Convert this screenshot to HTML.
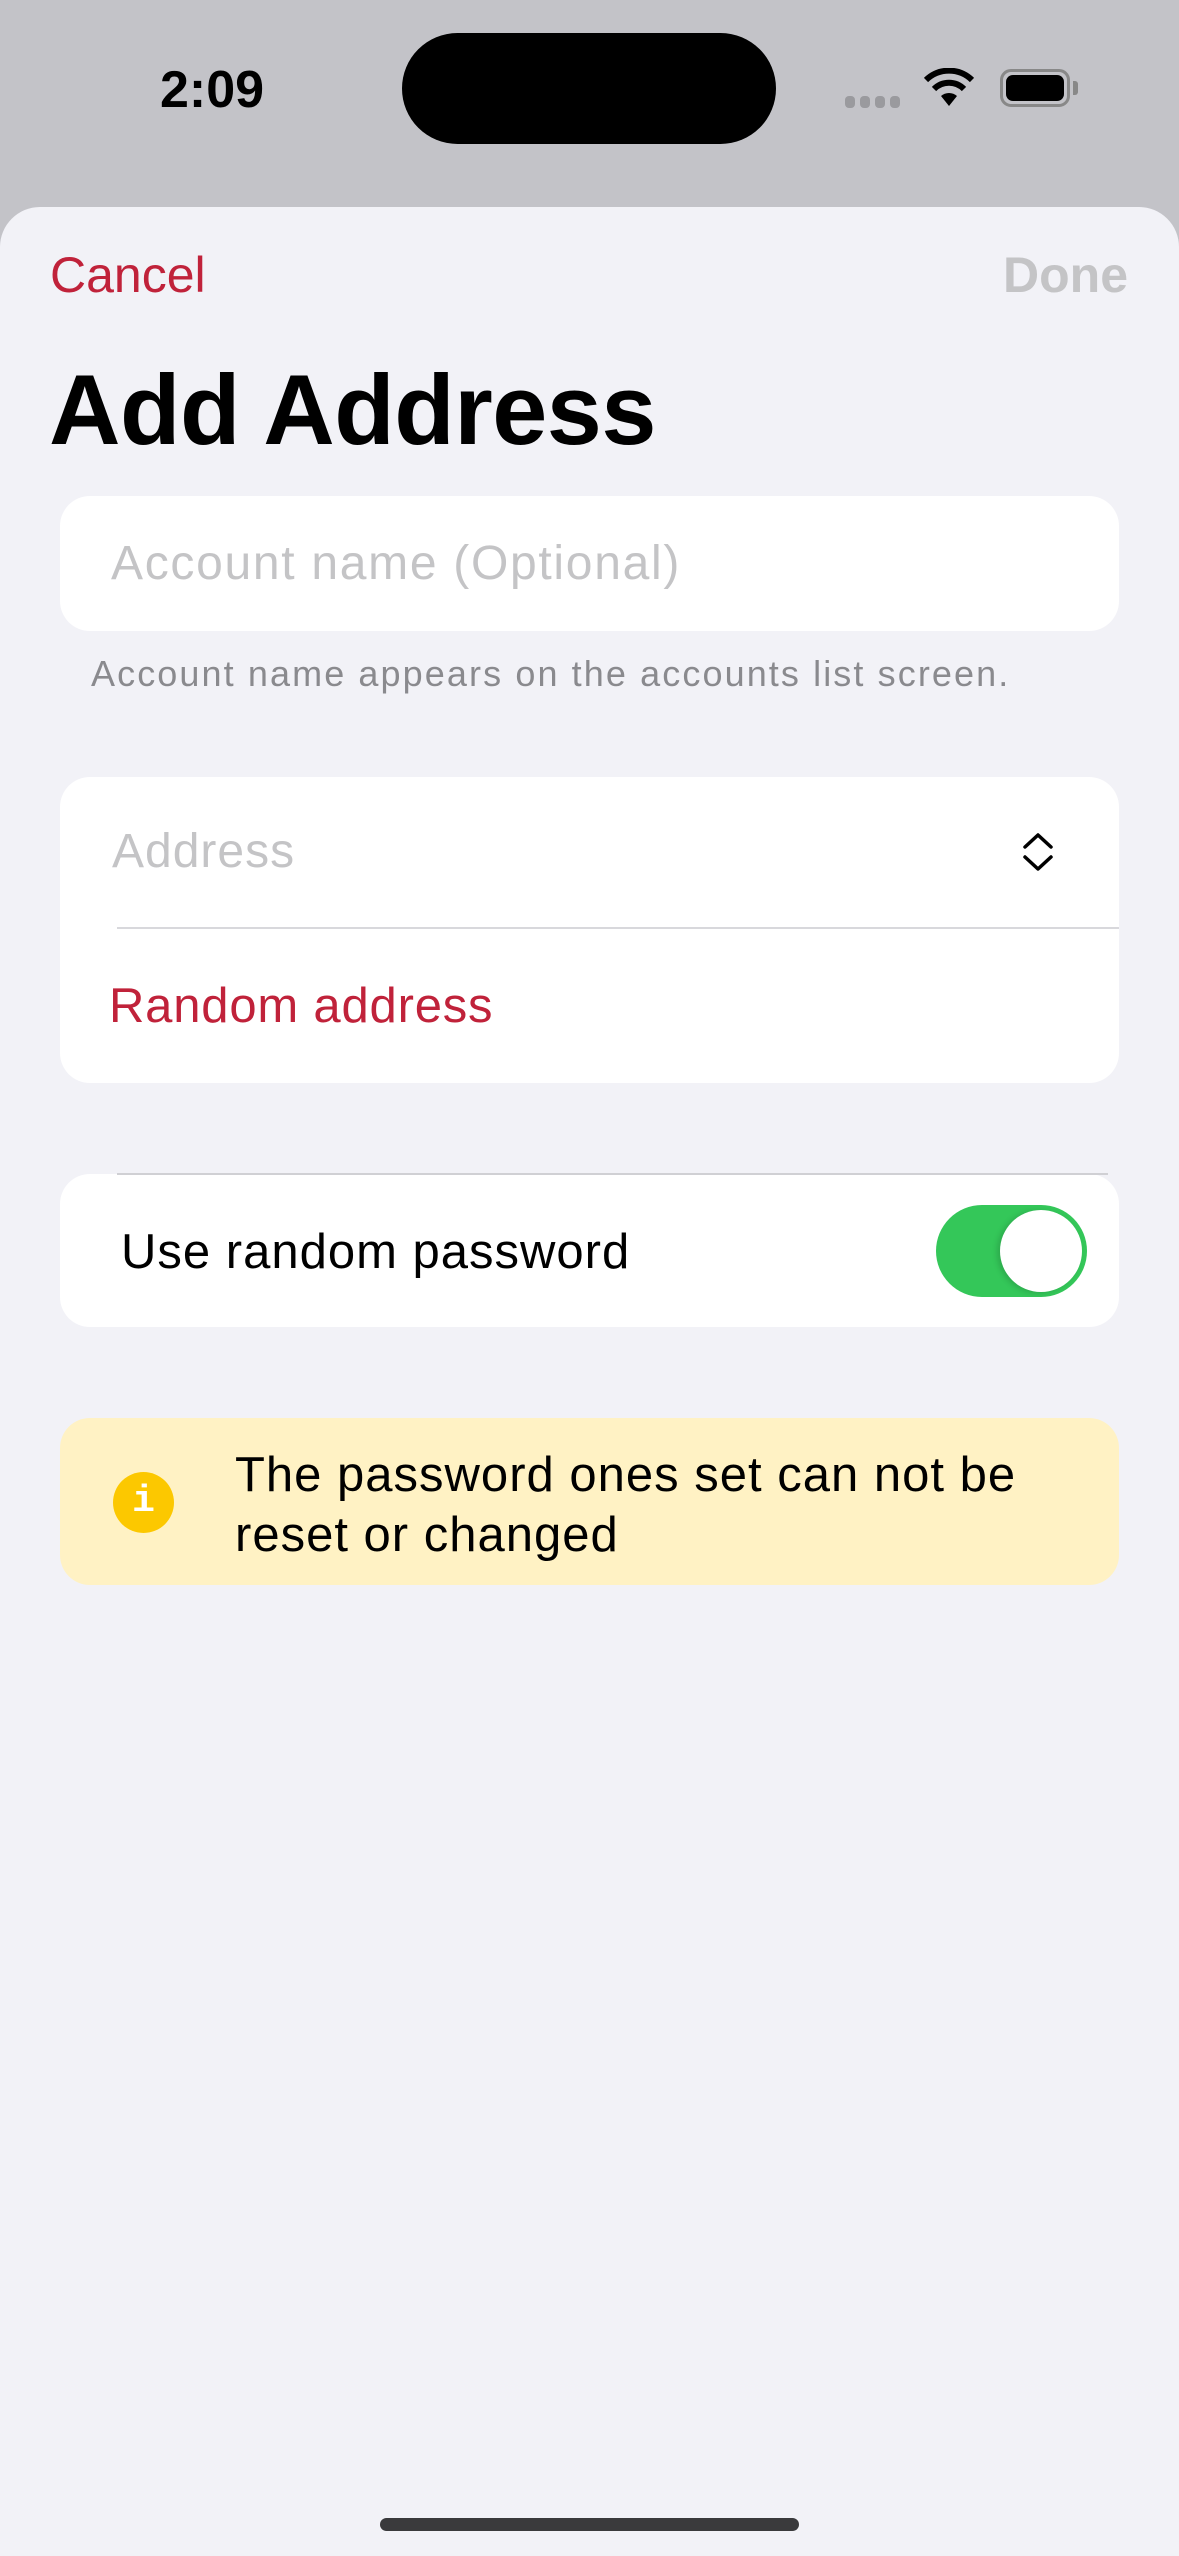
<!DOCTYPE html>
<html><head><meta charset="utf-8"><style>
*{margin:0;padding:0;box-sizing:border-box}
body{width:1179px;height:2556px;background:#c3c3c8;font-family:"Liberation Sans",sans-serif;position:relative;overflow:hidden}
.a{position:absolute;white-space:nowrap}
.sheet{position:absolute;left:0;top:207px;width:1179px;height:2349px;background:#f2f2f7;border-radius:40px 40px 0 0}
.card{position:absolute;left:60px;width:1059px;background:#fff;border-radius:30px}
.t{line-height:1}
</style></head><body>
<div class="a t" style="left:160px;top:64px;font-size:52px;font-weight:bold;color:#000">2:09</div>
<div class="a" style="left:402px;top:33px;width:374px;height:111px;background:#000;border-radius:56px"></div>
<div class="a" style="left:845px;top:96px;width:60px;height:12px">
<div class="a" style="left:0;top:0;width:10px;height:12px;border-radius:4px;background:#9a9a9e"></div>
<div class="a" style="left:15px;top:0;width:10px;height:12px;border-radius:4px;background:#9a9a9e"></div>
<div class="a" style="left:30px;top:0;width:10px;height:12px;border-radius:4px;background:#9a9a9e"></div>
<div class="a" style="left:45px;top:0;width:10px;height:12px;border-radius:4px;background:#9a9a9e"></div>
</div>
<svg class="a" style="left:922px;top:68px" width="54" height="40" viewBox="0 0 54 40"><path d="M27 38 L19 28 A12 12 0 0 1 35 28 Z" fill="#000"/><path d="M12 21 A21 21 0 0 1 42 21" stroke="#000" stroke-width="6" fill="none"/><path d="M4 12 A33 33 0 0 1 50 12" stroke="#000" stroke-width="6" fill="none"/></svg>
<div class="a" style="left:1000px;top:69px;width:70px;height:38px;border:3px solid #888;border-radius:11px"></div>
<div class="a" style="left:1006px;top:75px;width:58px;height:26px;background:#000;border-radius:7px"></div>
<div class="a" style="left:1073px;top:81px;width:5px;height:14px;background:#888;border-radius:0 3px 3px 0"></div>
<div class="sheet"></div>
<div class="a t" style="left:50px;top:250px;font-size:50px;color:#c0223a">Cancel</div>
<div class="a t" style="right:51px;top:250px;font-size:50px;font-weight:bold;color:#c4c4c6">Done</div>
<div class="a t" style="left:49px;top:360px;font-size:99px;font-weight:bold;color:#000;letter-spacing:-0.5px">Add Address</div>
<div class="card" style="top:496px;height:135px"></div>
<div class="a t" style="left:111px;top:540px;font-size:48px;color:#c4c4c6;letter-spacing:1.7px">Account name (Optional)</div>
<div class="a t" style="left:91px;top:656px;font-size:36px;color:#8a8a8e;letter-spacing:2.1px">Account name appears on the accounts list screen.</div>
<div class="card" style="top:777px;height:306px"></div>
<div class="a t" style="left:112px;top:828px;font-size:48px;color:#c4c4c6;letter-spacing:1px">Address</div>
<svg class="a" style="left:1020px;top:832px" width="36" height="40" viewBox="0 0 36 40"><path d="M5 15 L18 3 L31 15 M5 25 L18 37 L31 25" stroke="#000" stroke-width="3.5" fill="none" stroke-linecap="round" stroke-linejoin="round"/></svg>
<div class="a" style="left:117px;top:927px;width:1002px;height:2px;background:#d8d8dc"></div>
<div class="a t" style="left:109px;top:982px;font-size:49px;color:#c0223a;letter-spacing:0.8px">Random address</div>
<div class="card" style="top:1174px;height:153px"></div>
<div class="a" style="left:117px;top:1173px;width:991px;height:2px;background:#d0d0d4"></div>
<div class="a t" style="left:121px;top:1228px;font-size:49px;color:#000;letter-spacing:1px">Use random password</div>
<div class="a" style="left:936px;top:1205px;width:151px;height:92px;background:#34c759;border-radius:46px"></div>
<div class="a" style="left:1000px;top:1210px;width:82px;height:82px;background:#fff;border-radius:50%;box-shadow:-3px 1px 6px rgba(0,0,0,.15)"></div>
<div class="card" style="top:1418px;height:167px;background:#fff2c4"></div>
<div class="a" style="left:113px;top:1472px;width:61px;height:61px;border-radius:50%;background:#fcc800"></div>
<div class="a t" style="left:113px;top:1483px;width:61px;text-align:center;font-family:'Liberation Mono',monospace;font-weight:bold;font-size:38px;color:#fff">i</div>
<div class="a" style="left:235px;top:1445px;font-size:49px;line-height:60px;color:#000;white-space:normal;width:880px;letter-spacing:1px">The password ones set can not be<br>reset or changed</div>
<div class="a" style="left:380px;top:2518px;width:419px;height:13px;background:#3a3a3c;border-radius:7px"></div>
</body></html>
